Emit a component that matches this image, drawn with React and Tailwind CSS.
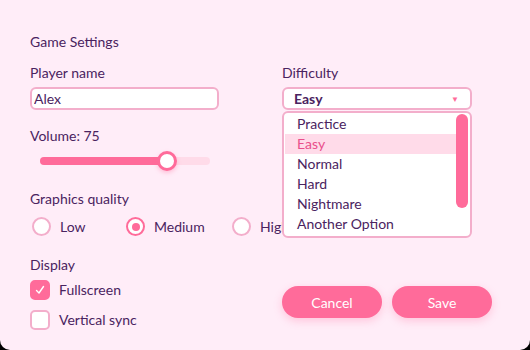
import React, { useState } from "react";

const font = { fontFamily: "Lato, 'Open Sans', sans-serif" };

const options = ["Practice", "Easy", "Normal", "Hard", "Nightmare", "Another Option"];

const Radio = ({ label, checked, width }) => (
  <label className={`flex shrink-0 items-center gap-[9px] ${width}`}>
    <span
      className={`flex h-[19px] w-[19px] shrink-0 items-center justify-center rounded-full border-[2.5px] bg-white ${
        checked ? "border-[#ff6b9a]" : "border-[#f3aecb]"
      }`}
    >
      {checked && <span className="h-[8px] w-[8px] rounded-full bg-[#ff6b9a]" />}
    </span>
    <span className="text-[14px] text-[#4a2360]">{label}</span>
  </label>
);

const Checkbox = ({ label, checked }) => (
  <label className="flex h-[20px] items-center gap-[9px]">
    <span
      className={`flex h-[20px] w-[20px] items-center justify-center rounded-[5px] border-[2.5px] ${
        checked ? "border-[#ff6b9a] bg-[#ff6b9a]" : "border-[#f3aecb] bg-white"
      }`}
    >
      {checked && (
        <svg width="10" height="10" viewBox="0 0 10 10" fill="none">
          <path d="M1.5 5.5 L4 8 L8.5 1.5" stroke="white" strokeWidth="1.4" strokeLinecap="round" strokeLinejoin="round" />
        </svg>
      )}
    </span>
    <span className="text-[14px] leading-[20px] text-[#4a2360]">{label}</span>
  </label>
);

const App = () => {
  const [name, setName] = useState("Alex");

  return (
    <div className="h-[350px] w-[530px] overflow-hidden bg-black" style={font}>
      <div className="flex h-[350px] w-[530px] flex-col rounded-b-[10px] bg-[#ffedf8] px-[30px] pt-[32px] text-[#4a2360]">
        <h3 className="text-[14px] leading-[20px]">Game Settings</h3>

        <div className="mt-[11px] flex items-start">
          {/* left column */}
          <div className="flex w-[252px] flex-col">
            <label className="text-[14px] leading-[20px]">Player name</label>
            <input
              type="text"
              value={name}
              onChange={(e) => setName(e.target.value)}
              className="mt-[4px] h-[23px] w-[189px] rounded-[6px] border-[2.5px] border-[#f3aecb] bg-white px-[2px] text-[14px] text-[#4a2360] outline-none"
            />

            <label className="mt-[16px] text-[14px] leading-[20px]">Volume: 75</label>
            <div className="relative ml-[10px] mt-[11px] h-[8px] w-[170px] rounded-full bg-[#ffdbe9]">
              <div className="h-[8px] w-[127px] rounded-full bg-[#ff6b9a]" />
              <div className="absolute left-[117px] top-[-6px] h-[20px] w-[20px] rounded-full border-[3px] border-[#ff6b9a] bg-white shadow-[0_2px_4px_rgba(255,107,154,0.35)]" />
            </div>

            <label className="mt-[24px] text-[14px] leading-[20px]">Graphics quality</label>
            <div className="mt-[7px] flex items-center pl-[2px]">
              <Radio label="Low" width="w-[94px]" />
              <Radio label="Medium" checked width="w-[106px]" />
              <Radio label="High" width="w-[60px]" />
            </div>

            <label className="mt-[18px] text-[14px] leading-[20px]">Display</label>
            <div className="mt-[5px] flex flex-col gap-[10px]">
              <Checkbox label="Fullscreen" checked />
              <Checkbox label="Vertical sync" />
            </div>
          </div>

          {/* right column */}
          <div className="relative z-10 flex flex-1 flex-col">
            <label className="text-[14px] leading-[20px]">Difficulty</label>
            <div className="relative mt-[4px] w-[190px]">
              <div className="flex h-[23px] items-center justify-between rounded-[6px] border-[2.5px] border-[#f3aecb] bg-white pl-[10px] pr-[11px]">
                <span className="text-[14px] font-bold">Easy</span>
                <span className="text-[8px] text-[#ff6b9a]">▼</span>
              </div>
              <div className="absolute left-0 top-[24px] z-10 flex h-[127px] w-[190px] rounded-[6px] border-[2.5px] border-[#f3aecb] bg-white py-[1px] pl-[1px] pr-[2px]">
                <ul className="flex flex-1 flex-col">
                  {options.map((o) => (
                    <li
                      key={o}
                      className={`h-[20px] pl-[12px] text-[14px] leading-[20px] ${
                        o === "Easy" ? "bg-[#ffdbe9] text-[#e94f8b]" : "text-[#4a2360]"
                      }`}
                    >
                      {o}
                    </li>
                  ))}
                </ul>
                <div className="h-[94px] w-[12px] rounded-full bg-[#ff6b9a]" />
              </div>
            </div>

            <div className="mt-[176px] flex gap-[10px]">
              <button className="h-[32px] w-[100px] rounded-full bg-[#ff6b9a] text-[14px] text-white shadow-[0_3px_8px_rgba(255,107,154,0.3)]">
                Cancel
              </button>
              <button className="h-[32px] w-[100px] rounded-full bg-[#ff6b9a] text-[14px] text-white shadow-[0_3px_8px_rgba(255,107,154,0.3)]">
                Save
              </button>
            </div>
          </div>
        </div>
      </div>
    </div>
  );
};

export default App;
